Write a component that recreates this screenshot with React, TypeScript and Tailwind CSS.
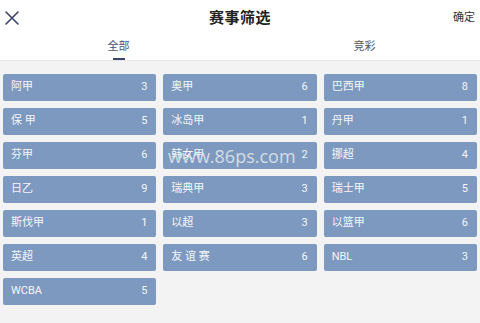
import React from "react";

const items: [string, number][] = [
  ["阿甲", 3], ["奥甲", 6], ["巴西甲", 8],
  ["保 甲", 5], ["冰岛甲", 1], ["丹甲", 1],
  ["芬甲", 6], ["韩女甲", 2], ["挪超", 4],
  ["日乙", 9], ["瑞典甲", 3], ["瑞士甲", 5],
  ["斯伐甲", 1], ["以超", 3], ["以篮甲", 6],
  ["英超", 4], ["友 谊 赛", 6], ["NBL", 3],
  ["WCBA", 5],
];

export default function App() {
  return (
    <div
      className="relative w-[480px] h-[323px] bg-[#f3f3f3] overflow-hidden"
      style={{ fontFamily: "Roboto, 'Noto Sans CJK SC', sans-serif" }}
    >
      <div className="bg-white border-b border-[#e6e6e6]">
        <div className="relative h-[36px] flex items-center justify-center">
          <svg className="absolute left-[5px] top-[11px]" width="14" height="14" viewBox="0 0 14 14">
            <path d="M1 1 L13 13 M13 1 L1 13" stroke="#3b4569" strokeWidth="1.6" strokeLinecap="round" />
          </svg>
          <span className="text-[15px] font-bold text-[#222] tracking-[0.5px]">赛事筛选</span>
          <span className="absolute right-[5px] top-[10px] text-[11px] text-[#333]">确定</span>
        </div>
        <div className="h-[24px] flex">
          <div className="w-[237px] flex flex-col items-center">
            <span className="text-[11px] leading-[14px] mt-[4px] text-[#47517a]">全部</span>
            <div className="mt-[4px] w-[12px] h-[2px] bg-[#3b4569]" />
          </div>
          <div className="flex-1 flex flex-col items-center pl-[12px]">
            <span className="text-[11px] leading-[14px] mt-[4px] text-[#555]">竞彩</span>
          </div>
        </div>
      </div>
      <div className="grid grid-cols-3 gap-x-[7px] gap-y-[7px] px-[3px] pt-[13px]">
        {items.map(([name, n]) => (
          <div
            key={name}
            className="h-[27px] rounded-[2px] bg-[#7d99c0] flex items-center justify-between pl-[8px] pr-[9px] text-[11px] text-[#f4f6fa]"
          >
            <span className="whitespace-pre">{name}</span>
            <span>{n}</span>
          </div>
        ))}
      </div>
      <div
        className="absolute left-[168px] top-[143px] text-[18px] leading-[26px] text-[#dfe3ea] opacity-90 pointer-events-none"
        style={{ fontFamily: "'Open Sans', sans-serif" }}
      >
        www.86ps.com
      </div>
    </div>
  );
}
